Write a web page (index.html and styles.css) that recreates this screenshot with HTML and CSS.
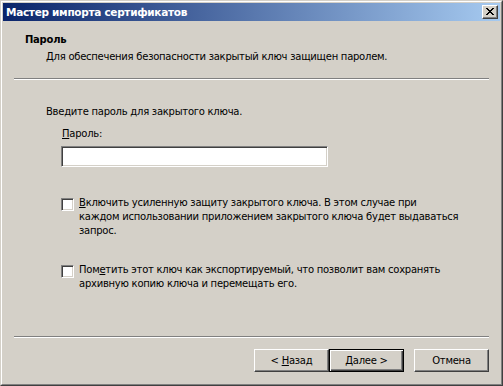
FILE: index.html
```html
<!DOCTYPE html>
<html lang="ru">
<head>
    <meta charset="UTF-8">
    <title>Мастер импорта сертификатов</title>
    <link rel="stylesheet" href="styles.css">
</head>
<body>
    <div class="window">
        <div class="window-inner">
            <div class="titlebar">
                <span class="title">Мастер импорта сертификатов</span>
                <span class="close-btn">
                    <svg width="8" height="7" viewBox="0 0 8 7">
                        <path d="M0 0h2v1h1v1h2v-1h1v-1h2v1h-1v1h-1v1h-1v1h1v1h1v1h1v1h-2v-1h-1v-1h-2v1h-1v1h-2v-1h1v-1h1v-1h1v-1h-1v-1h-1v-1h-1z" fill="#000"/>
                    </svg>
                </span>
            </div>

            <div class="dialog-body">
                <div class="page-header">
                    <h1 class="page-title">Пароль</h1>
                    <p class="page-desc">Для обеспечения безопасности закрытый ключ защищен паролем.</p>
                </div>
                <div class="separator"></div>

                <div class="page-content">
                    <p class="intro">Введите пароль для закрытого ключа.</p>
                    <div class="field">
                        <label class="field-label"><u>П</u>ароль:</label>
                        <div class="textbox"></div>
                    </div>

                    <label class="check first">
                        <span class="check-box"></span>
                        <span class="check-text"><u>В</u>ключить усиленную защиту закрытого ключа. В этом случае при<br>каждом использовании приложением закрытого ключа будет выдаваться<br>запрос.</span>
                    </label>

                    <label class="check second">
                        <span class="check-box"></span>
                        <span class="check-text">Пом<u>е</u>тить этот ключ как экспортируемый, что позволит вам сохранять<br>архивную копию ключа и перемещать его.</span>
                    </label>
                </div>

                <div class="separator"></div>
                <div class="buttons">
                    <button class="btn">&lt; <u>Н</u>азад</button>
                    <button class="btn default"><u>Д</u>алее &gt;</button>
                    <button class="btn cancel">Отмена</button>
                </div>
            </div>
        </div>
    </div>
</body>
</html>
```

FILE: styles.css
```css
body {
    margin: 0;
    background-color: #d4d0c8;
    font-family: "DejaVu Sans", Tahoma, sans-serif;
    font-size: 10px;
    letter-spacing: -0.25px;
    color: #000;
}

/* рамка окна в классическом стиле */
.window {
    width: 503px;
    height: 386px;
    box-sizing: border-box;
    border: 1px solid;
    border-color: #d4d0c8 #404040 #404040 #d4d0c8;
}

.window-inner {
    height: 100%;
    box-sizing: border-box;
    border: 1px solid;
    border-color: #fff #808080 #808080 #fff;
    padding: 1px;
    display: flex;
    flex-direction: column;
}

.titlebar {
    height: 18px;
    display: flex;
    align-items: center;
    justify-content: space-between;
    padding: 0 2px 0 3px;
    background: linear-gradient(to right, #0a246a, #a6caf0);
}

.title {
    color: #fff;
    font-weight: bold;
    font-size: 10.5px;
    letter-spacing: -0.3px;
}

.close-btn {
    width: 16px;
    height: 14px;
    box-sizing: border-box;
    background-color: #d4d0c8;
    border: 1px solid;
    border-color: #fff #404040 #404040 #fff;
    box-shadow: inset -1px -1px 0 #808080;
    display: flex;
    align-items: center;
    justify-content: center;
    padding: 0 1px 1px 0;
}

.close-btn svg {
    display: block;
}

.dialog-body {
    flex: 1;
    display: flex;
    flex-direction: column;
}

.page-header {
    height: 57px;
    box-sizing: border-box;
    padding: 12px 0 0 22px;
}

.page-title {
    margin: 0;
    font-size: 10px;
    line-height: 14px;
    font-weight: bold;
}

.page-desc {
    margin: 3px 0 0 21px;
    line-height: 14px;
}

.separator {
    margin: 0 11px;
    border-top: 1px solid #808080;
    border-bottom: 1px solid #fff;
}

.page-content {
    flex: 1;
    padding: 25px 0 0 43px;
    line-height: 14px;
}

.intro {
    margin: 0;
}

.field {
    margin: 8px 0 0 15px;
}

.field-label {
    display: block;
    padding-left: 1px;
}

.textbox {
    margin-top: 5px;
    width: 267px;
    height: 21px;
    box-sizing: border-box;
    background-color: #fff;
    border: 1px solid;
    border-color: #808080 #fff #fff #808080;
    box-shadow: inset 1px 1px 0 #404040, inset -1px -1px 0 #d4d0c8;
}

.check {
    display: flex;
    gap: 5px;
    margin-left: 15px;
    white-space: nowrap;
}

.check.first {
    margin-top: 29px;
}

.check.second {
    margin-top: 25px;
}

.check-box {
    flex: none;
    width: 13px;
    height: 13px;
    margin-top: 2px;
    box-sizing: border-box;
    background-color: #fff;
    border: 1px solid;
    border-color: #808080 #fff #fff #808080;
    box-shadow: inset 1px 1px 0 #404040, inset -1px -1px 0 #d4d0c8;
}

.buttons {
    display: flex;
    justify-content: flex-end;
    padding: 11px 11px 11px;
}

.btn {
    width: 75px;
    height: 23px;
    box-sizing: border-box;
    font-family: inherit;
    font-size: 10px;
    letter-spacing: -0.25px;
    color: #000;
    background-color: #d4d0c8;
    border: 1px solid;
    border-color: #fff #404040 #404040 #fff;
    box-shadow: inset -1px -1px 0 #808080;
    padding: 0;
}

.btn.default {
    border: 1px solid #000;
    box-shadow: inset 1px 1px 0 #fff, inset -1px -1px 0 #404040, inset -2px -2px 0 #808080;
}

.btn.cancel {
    margin-left: 10px;
}
```
